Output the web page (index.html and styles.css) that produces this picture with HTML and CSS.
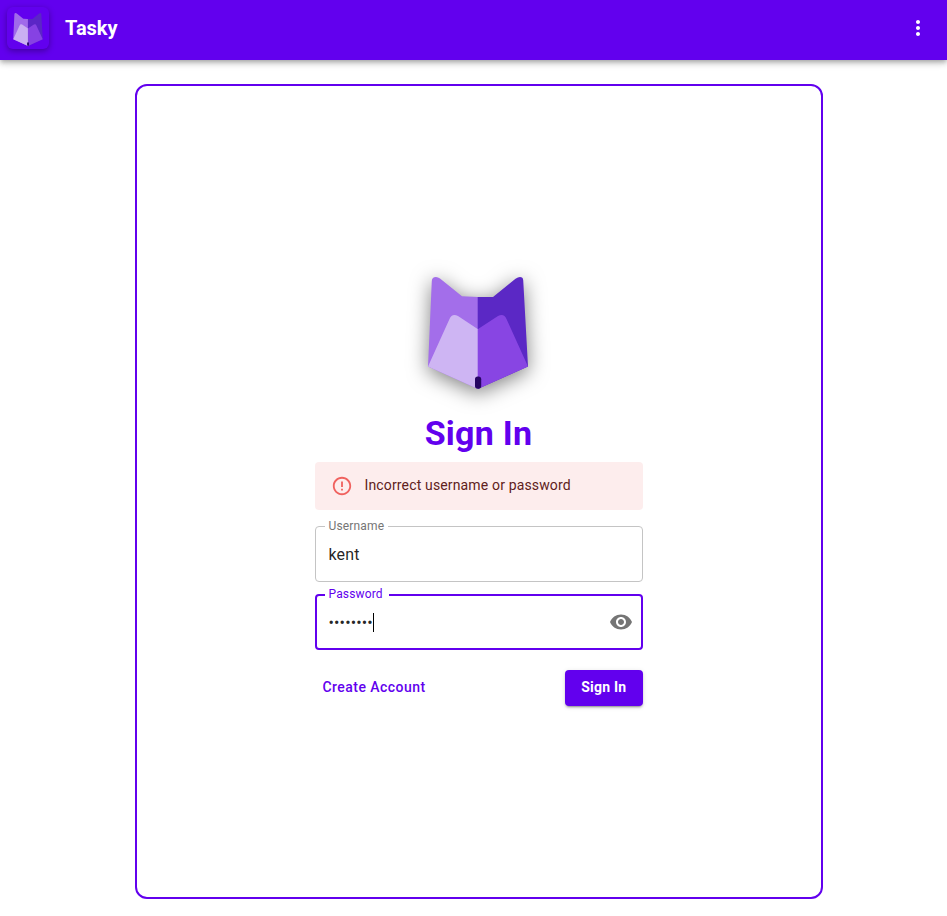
FILE: index.html
```html
<!DOCTYPE html>
<html lang="en">
<head>
<meta charset="utf-8">
<title>Tasky</title>
<link rel="stylesheet" href="styles.css">
</head>
<body>
<svg width="0" height="0" class="defs" aria-hidden="true">
  <symbol id="fox" viewBox="28 27 100 112">
    <path fill="#a36eea" d="M28 116.5 31.8 31Q32 27 36 27Q38 27 40 28.5L62 46.3L78 47V139Z"/>
    <path fill="#5b28c5" d="M128 116.5 123.2 30Q123 27 120 27Q118 27 115.5 28.8L93 47H77.7V139Z"/>
    <path fill="#ceb5f3" d="M28 116.5 49.5 69Q52 63 58 66L78 79.3V139Z"/>
    <path fill="#8845e3" d="M128 116.5 106.500 69Q104 63 98 66L77.700 79.300V139Z"/>
    <rect x="75" y="126.500" width="6.200" height="12.300" rx="2.800" fill="#260463"/>
  </symbol>
</svg>
<header class="bar">
  <div class="brand"><svg class="brand-fox"><use href="#fox"/></svg></div>
  <span class="title">Tasky</span>
  <svg class="more" viewBox="0 0 24 24"><path fill="#fff" d="M12 8c1.100 0 2-.9 2-2s-.9-2-2-2-2 .9-2 2 .9 2 2 2zm0 2c-1.100 0-2 .9-2 2s.9 2 2 2 2-.9 2-2-.9-2-2-2zm0 6c-1.100 0-2 .9-2 2s.9 2 2 2 2-.9 2-2-.9-2-2-2z"/></svg>
</header>
<main class="card">
  <form class="form">
    <svg class="logo"><use href="#fox"/></svg>
    <h1>Sign In</h1>
    <div class="alert">
      <svg viewBox="0 0 24 24"><path fill="#ef5350" d="M11 15h2v2h-2zm0-8h2v6h-2zm.99-5C6.470 2 2 6.480 2 12s4.470 10 9.990 10C17.520 22 22 17.520 22 12S17.520 2 11.990 2zM12 20c-4.420 0-8-3.580-8-8s3.580-8 8-8 8 3.580 8 8-3.580 8-8 8z"/></svg>
      <span>Incorrect username or password</span>
    </div>
    <fieldset class="field">
      <legend>Username</legend>
      <div class="value">kent</div>
    </fieldset>
    <fieldset class="field focused">
      <legend>Password</legend>
      <div class="value"><span class="dots">••••••••</span><i class="caret"></i>
        <svg class="eye" viewBox="0 0 24 24"><path fill="#757575" d="M12 4.500C7 4.500 2.730 7.610 1 12c1.730 4.390 6 7.500 11 7.500s9.270-3.110 11-7.500c-1.730-4.390-6-7.500-11-7.500zM12 17c-2.760 0-5-2.240-5-5s2.240-5 5-5 5 2.240 5 5-2.240 5-5 5zm0-8c-1.660 0-3 1.340-3 3s1.340 3 3 3 3-1.340 3-3-1.340-3-3-3z"/></svg>
      </div>
    </fieldset>
    <div class="actions">
      <button type="button" class="link">Create Account</button>
      <button type="button" class="primary">Sign In</button>
    </div>
  </form>
</main>
</body>
</html>
```
FILE: styles.css
```css
* { box-sizing: border-box; }
body { margin: 0; background: #fff; font-family: Roboto, sans-serif; color: rgba(0,0,0,.87); }
.defs { position: absolute; }
.bar {
  height: 60px;
  padding: 0 17px 4px 7px;
  display: flex;
  align-items: center;
  background: #6200ee;
  box-shadow: 0 2px 4px -1px rgba(0,0,0,.2), 0 4px 5px rgba(0,0,0,.14), 0 1px 10px rgba(0,0,0,.12);
}
.brand {
  width: 42px;
  height: 42px;
  padding: 6px 6px 3px;
  border-radius: 6px;
  box-shadow: 0 2px 6px rgba(0,0,0,.34);
}
.brand-fox { display: block; width: 30px; height: 33px; opacity: .97; }
.title { margin-left: 16px; font-size: 20px; line-height: 24px; font-weight: 700; color: #fff; letter-spacing: -.05px; }
.more { width: 24px; height: 24px; margin-left: auto; }
.card {
  width: 688px;
  height: 815px;
  margin: 24px 0 0 135px;
  padding-top: 191px;
  border: 2px solid #6200ee;
  border-radius: 12px;
}
.form { width: 328px; margin: 0 auto; display: flex; flex-direction: column; }
.logo { width: 100px; height: 112px; margin-left: 113px; overflow: visible; filter: drop-shadow(0 4px 10px rgba(0,0,0,.5)); }
h1 { margin: 23px 1px 8px 0; font-size: 34px; line-height: 42px; font-weight: 700; letter-spacing: .25px; text-align: center; color: #6200ee; }
.alert { height: 48px; padding: 0 16px; display: flex; align-items: center; border-radius: 4px; background: #fdeded; color: #5f2120; font-size: 14px; letter-spacing: .15px; }
.alert svg { width: 22px; height: 22px; margin-right: 11.500px; opacity: .9; }
.alert span { padding-bottom: 2px; }
.field {
  width: 328px;
  height: 62px;
  margin: 10px 0 0;
  padding: 0 12.500px;
  border: 1px solid #c4c4c4;
  border-radius: 4px;
}
.field legend { height: 12px; margin-left: -4px; padding: 0 4px; font-size: 12px; line-height: 12px; letter-spacing: .15px; color: #757575; }
.value { height: 44px; display: flex; align-items: center; font-size: 16px; letter-spacing: .15px; }
.focused { margin-top: 6px; padding: 0 12px 0 11.500px; border: 2px solid #6200ee; }
.field.focused legend { height: 14px; padding-right: 6px; color: #6200ee; }
.focused .value { height: 40px; }
.caret { width: 1px; height: 19px; background: #000; }
.eye { width: 24px; height: 24px; margin-left: auto; margin-right: -4px; }
.actions { display: flex; justify-content: space-between; margin-top: 20px; }
button { height: 36px; padding: 0 8px 2px 7.500px; border: 0; border-radius: 4px; background: none; font: 500 14px/24px Roboto, sans-serif; letter-spacing: .45px; color: #6200ee; }
.primary { width: 78px; background: #6200ee; color: #fff; font-weight: 700; letter-spacing: .2px; box-shadow: 0 3px 1px -2px rgba(0,0,0,.2), 0 2px 2px rgba(0,0,0,.14), 0 1px 5px rgba(0,0,0,.12); }
```
